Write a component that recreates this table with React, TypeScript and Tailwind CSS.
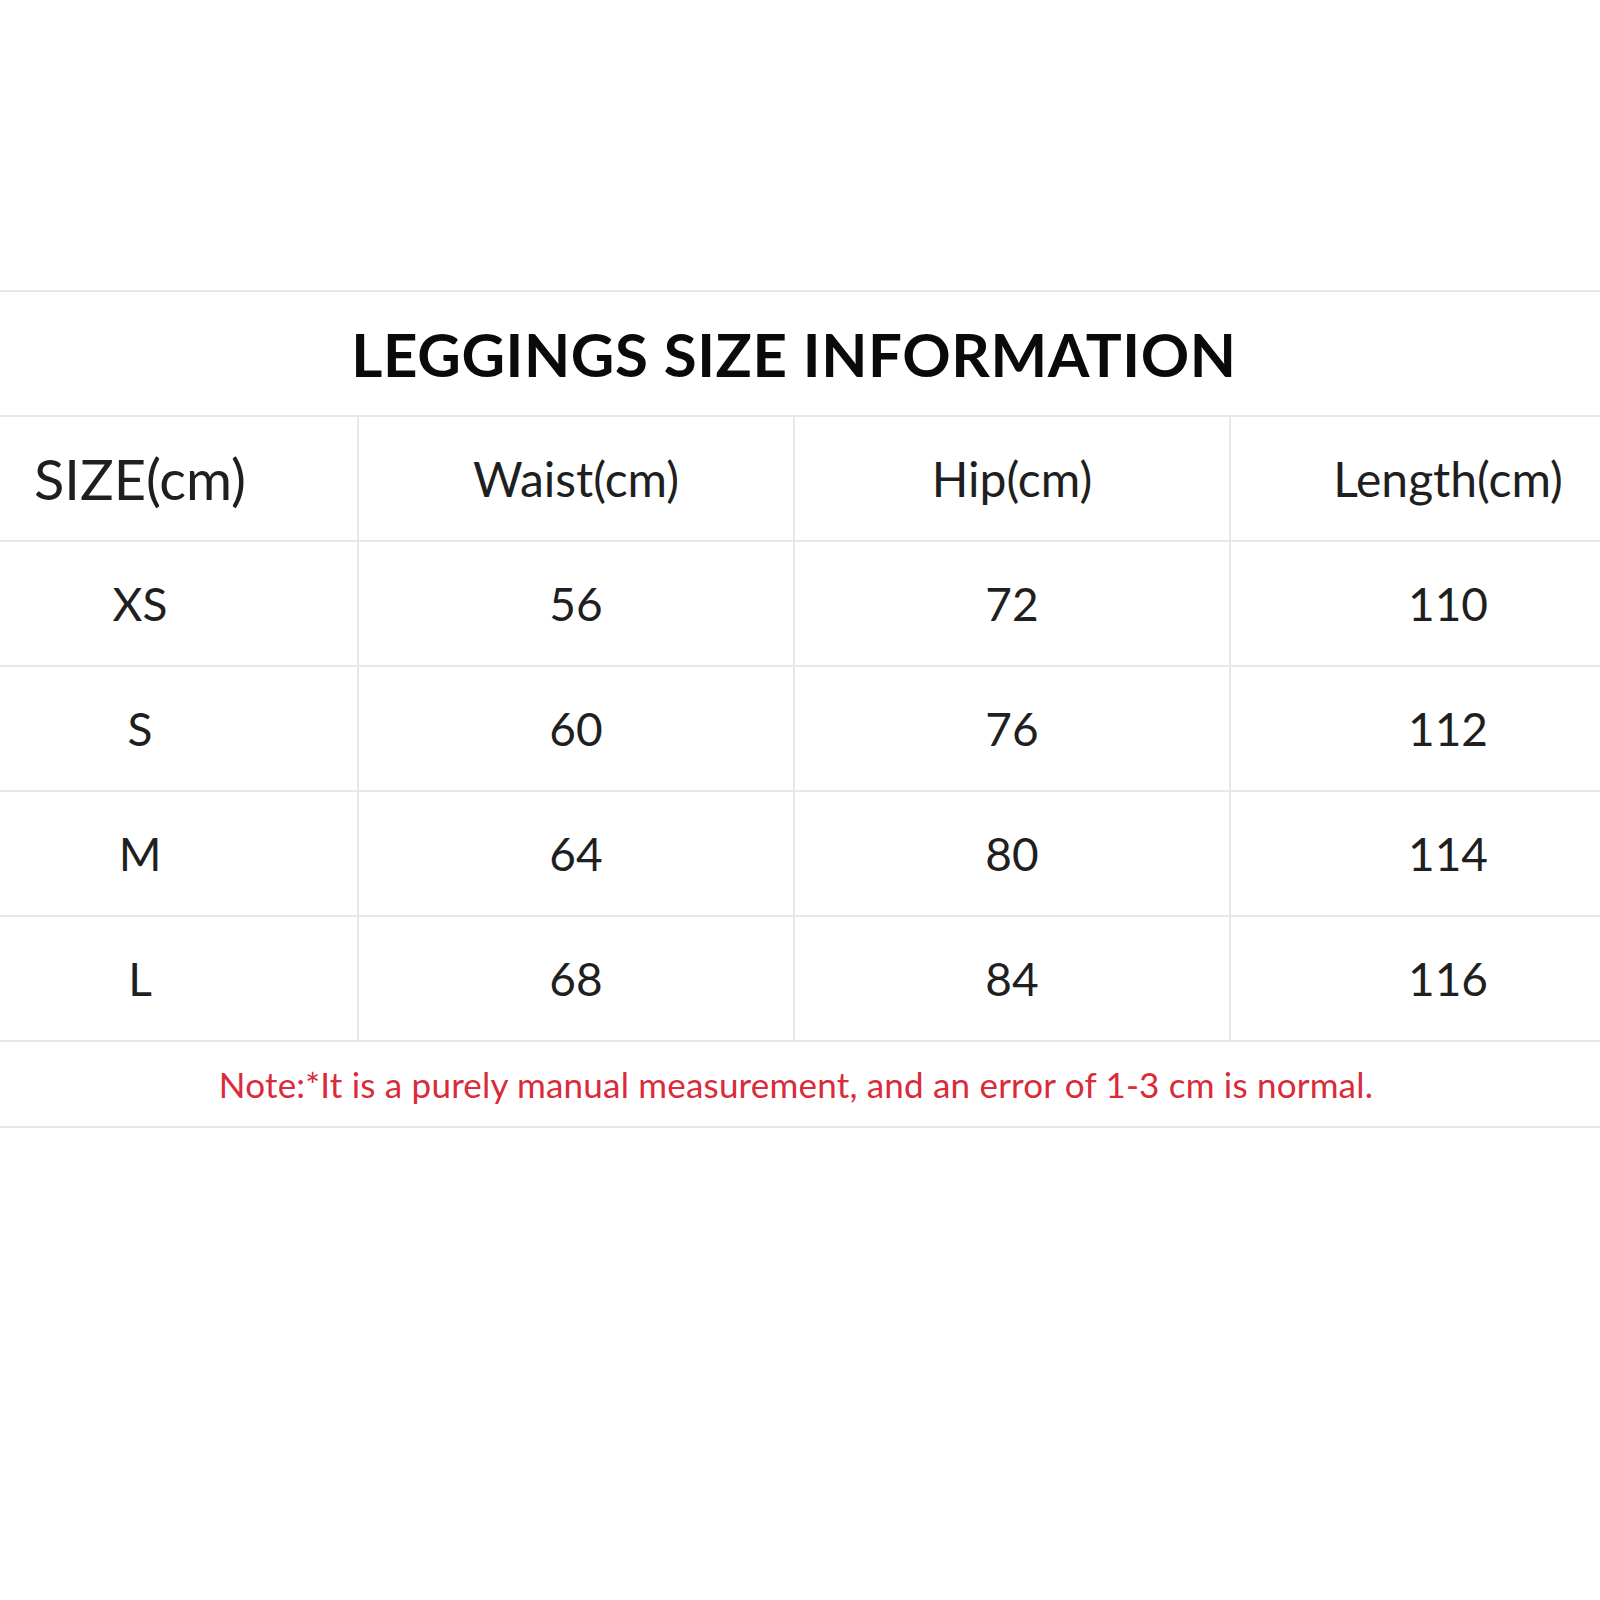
import React from "react";

const header = ["SIZE(cm)", "Waist(cm)", "Hip(cm)", "Length(cm)"];
const rows = [
  ["XS", "56", "72", "110"],
  ["S", "60", "76", "112"],
  ["M", "64", "80", "114"],
  ["L", "68", "84", "116"],
];

export default function App() {
  return (
    <div
      className="w-[1600px] h-[1600px] bg-white overflow-hidden pt-[290px]"
      style={{ fontFamily: "Lato, 'Open Sans', sans-serif" }}
    >
      <div className="border-t-2 border-[#e8e8e8]">
        <div className="h-[125px] flex items-center justify-center border-b-2 border-[#e8e8e8] pr-[12px]">
          <span className="text-[60px] font-bold text-[#0a0a0a] leading-none tracking-[0.6px]">
            LEGGINGS SIZE INFORMATION
          </span>
        </div>
        <div className="ml-[-77px] w-[1744px] grid grid-cols-4">
          {header.map((c, j) => (
            <div
              key={"h-" + j}
              className={
                "h-[125px] flex items-center justify-center border-b-2 border-r-2 border-[#e8e8e8] text-[#1f1f1f] leading-none " +
                (j === 0 ? "text-[56px]" : "text-[48px]")
              }
            >
              {c}
            </div>
          ))}
          {rows.map((r, i) =>
            r.map((c, j) => (
              <div
                key={i + "-" + j}
                className="h-[125px] flex items-center justify-center border-b-2 border-r-2 border-[#e8e8e8] text-[46px] text-[#1f1f1f] leading-none"
              >
                {c}
              </div>
            ))
          )}
        </div>
        <div className="h-[86px] flex items-center justify-center border-b-2 border-[#e8e8e8] pr-[8px]">
          <span className="text-[35px] text-[#d92b3a] leading-none tracking-[0.2px]">
            Note:*It is a purely manual measurement, and an error of 1-3 cm is normal.
          </span>
        </div>
      </div>
    </div>
  );
}
